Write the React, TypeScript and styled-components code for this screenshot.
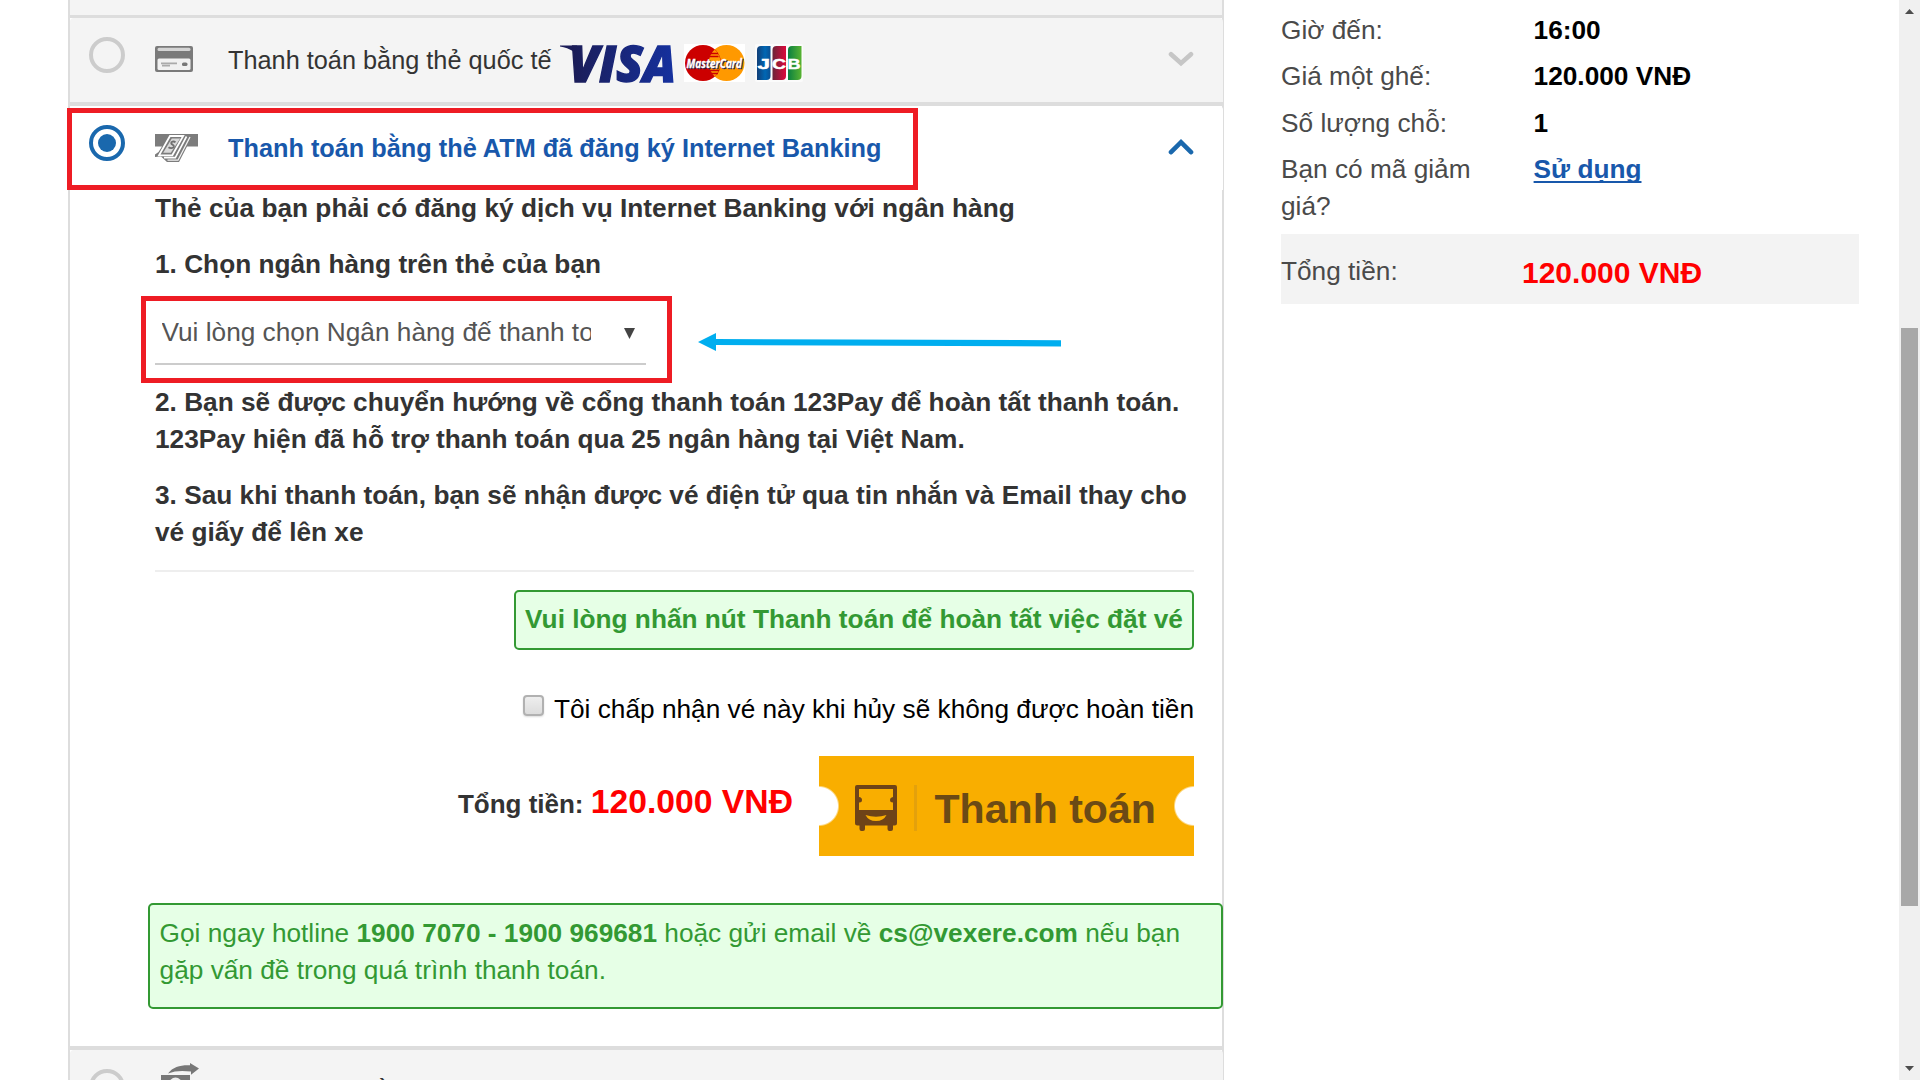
import React from 'react';
import styled, { createGlobalStyle, css } from 'styled-components';

const GlobalStyle = createGlobalStyle`
  *, *::before, *::after { box-sizing: border-box; }
  html, body { margin: 0; background: #fff; }
  body {
    font-family: "Liberation Sans", Arial, sans-serif;
    font-size: 26.24px;
    line-height: 37px;
    color: #333;
    overflow: hidden;
  }
  p { margin: 0; }
`;

const Page = styled.div`
  display: flex;
  width: 100%;
  height: 1080px;
  overflow: hidden;
  padding-left: 68px;
`;

const Panel = styled.main`
  flex: none;
  width: 1156px;
  border: solid #ddd;
  border-width: 0 2px;
`;

const PreviousMethod = styled.div`
  height: 18px;
  background: #f4f4f4;
  border-bottom: 3px solid #ddd;
`;

const MethodRow = styled.div<{ $active?: boolean }>`
  position: relative;
  display: flex;
  align-items: flex-start;
  width: 1153px;
  height: ${(p) => (p.$active ? '83.5px' : '88px')};
  padding: 19px 29px 0 19px;
  border-radius: 4px 4px 0 0;
  background: ${(p) => (p.$active ? '#fff' : '#f4f4f4')};
  border-bottom: ${(p) => (p.$active ? '0' : '4px solid #ddd')};
  color: ${(p) => (p.$active ? '#1858ab' : '#333')};
  font-size: 25.3px;
  font-weight: ${(p) => (p.$active ? 700 : 400)};
`;

const Radio = styled.span<{ $checked?: boolean }>`
  flex: none;
  display: grid;
  place-items: center;
  width: 36px;
  height: 36px;
  margin-right: 30px;
  border: 4px solid ${(p) => (p.$checked ? '#1a68ad' : '#ccc')};
  border-radius: 50%;
  ${(p) =>
    p.$checked &&
    css`
      &::after {
        content: '';
        width: 18px;
        height: 18px;
        border-radius: 50%;
        background: #1a68ad;
      }
    `}
`;

const MethodIcon = styled.span`
  flex: none;
  width: 73px;
  padding-top: 9px;
  svg { display: block; }
`;

const TransferSlot = styled(MethodIcon)`
  width: 68px;
  margin: -6px 0 0 5px;
  padding: 0;
`;

const MethodName = styled.span`
  padding-top: 5px;
  white-space: nowrap;
`;

const Brands = styled.span`
  display: flex;
  padding: 7px 0 0 8px;
  svg { display: block; }
`;

const LogoGap = styled.span<{ $w: number }>`
  width: ${(p) => p.$w}px;
`;

const Chevron = styled.span`
  margin-left: auto;
  padding-top: 13px;
  svg { display: block; }
`;

const HeaderFrame = styled.span`
  position: absolute;
  left: -3px;
  top: 2px;
  width: 851px;
  height: 82px;
  border: 5px solid #ee1c24;
`;

const Content = styled.section`
  padding: 0 28px 0 85px;
`;

const Step = styled.p`
  margin-bottom: 19px;
  font-weight: 700;
  white-space: nowrap;
`;

const BankSelect = styled.div`
  position: relative;
  display: flex;
  width: 491px;
  height: 63.5px;
  margin-bottom: 19px;
  padding: 12px 11px 0 6.5px;
  border-bottom: 2px solid #ccc;
  color: #555;
`;

const SelectText = styled.span`
  width: 429px;
  overflow: hidden;
  white-space: nowrap;
`;

const SelectArrow = styled.span`
  margin: 14.5px 0 0 auto;
  width: 11px;
  height: 11px;
  background: #444;
  clip-path: polygon(0 0, 100% 0, 50% 100%);
`;

const SelectFrame = styled.span`
  position: absolute;
  left: -14px;
  top: -6px;
  width: 531px;
  height: 87px;
  border: 5px solid #ee1c24;
`;

const Pointer = styled.svg`
  position: absolute;
  left: 543px;
  top: 30px;
`;

const Divider = styled.div`
  height: 2px;
  margin-bottom: 18px;
  background: #eee;
`;

const Checkout = styled.div`
  display: flex;
  flex-direction: column;
  align-items: flex-end;
`;

const Notice = styled.div`
  width: 680px;
  height: 60px;
  padding-top: 9px;
  border: 2px solid #393;
  border-radius: 5px;
  background: #e6ffe6;
  color: #393;
  font-weight: 700;
  text-align: center;
  white-space: nowrap;
`;

const Terms = styled.label`
  display: flex;
  align-items: flex-start;
  margin-top: 40.5px;
  color: #000;
  white-space: nowrap;
`;

const CheckBox = styled.span`
  width: 21px;
  height: 21px;
  margin: 4.5px 10px 0 0;
  border: 2px solid #b1b1b1;
  border-radius: 4px;
  background: linear-gradient(#eee, #dcdcdc);
  box-shadow: 0 1px 2px #ddd;
`;

const PayRow = styled.div`
  display: flex;
  align-items: flex-start;
  margin-top: 28.5px;
`;

const Total = styled.div`
  padding: 25px 26px 0 0;
  font-size: 26px;
  line-height: 41px;
  font-weight: 700;
  white-space: nowrap;
`;

const Amount = styled.span`
  color: #f00;
  font-size: 33.7px;
`;

const PayButton = styled.div`
  display: flex;
  align-items: center;
  width: 375px;
  height: 100px;
  padding: 0 0 0 36px;
  background:
    radial-gradient(circle at 0 50%, #fff 18.5px, transparent 20.5px),
    radial-gradient(circle at 100% 50%, #fff 18.5px, transparent 20.5px),
    #f9ae00;
  color: #6b4a15;
  font-size: 41.1px;
  font-weight: 700;
  white-space: nowrap;
  svg { display: block; margin-top: 4px; }
`;

const ButtonRule = styled.span`
  width: 3px;
  height: 46px;
  margin: 4px 18px 0 16.5px;
  background: #e4a10c;
`;

const ButtonText = styled.span`
  padding-top: 7px;
`;

const Hotline = styled.div`
  width: 1075px;
  height: 106px;
  margin: 47px 0 37px 78px;
  padding: 10px 0 0 9.6px;
  border: 2px solid #393;
  border-radius: 5px;
  background: #e6ffe6;
  color: #393;
  white-space: nowrap;
`;

const NextMethods = styled.div`
  border-top: 4px solid #ddd;
`;

const Summary = styled.aside`
  flex: none;
  width: 578px;
  margin-left: 57px;
  padding-top: 12px;
  color: #4a4a4a;
`;

const SummaryRow = styled.div`
  display: flex;
  margin-bottom: 9.3px;
`;

const SummaryLabel = styled.span`
  width: 220px;
  margin-right: 32.6px;
`;

const SummaryValue = styled.strong`
  color: #000;
`;

const PromoLink = styled.a`
  color: #1858ab;
  font-weight: 700;
  text-decoration: underline;
  text-decoration-thickness: 2px;
  text-underline-offset: 3px;
  text-decoration-skip-ink: none;
`;

const SummaryTotal = styled.div`
  display: flex;
  height: 70px;
  padding-top: 18.5px;
  background: #f3f3f3;
`;

const SummaryTotalLabel = styled.span`
  width: 241px;
`;

const SummaryTotalValue = styled.strong`
  padding-top: 1px;
  color: #f00;
  font-size: 30px;
`;

const ScrollBar = styled.div`
  flex: none;
  display: flex;
  flex-direction: column;
  align-items: center;
  justify-content: space-between;
  width: 21px;
  height: 1080px;
  margin-left: 40px;
  padding: 9px 0;
  background: #f0f0f0;
`;

const ScrollThumb = styled.div`
  width: 17px;
  height: 578px;
  margin: 314px 0 160px;
  background: #a8a8a8;
`;

const ScrollArrow = styled.span<{ $down?: boolean }>`
  width: 9px;
  height: 5px;
  background: #4d4d4d;
  clip-path: ${(p) => (p.$down ? 'polygon(0 0, 100% 0, 50% 100%)' : 'polygon(0 100%, 100% 100%, 50% 0)')};
`;

const CardIcon = () => (
  <svg width="38" height="26" viewBox="0 0 38 26">
    <rect width="38" height="26" rx="2" fill="#7a7a7a" />
    <rect x="2.5" y="1.8" width="33" height="3.2" rx="1.5" fill="#d4d4d4" />
    <rect x="2.5" y="12.6" width="33" height="11.4" rx="1.5" fill="#f1f1f1" />
    <path d="M6 17.3h16M7 19.7h8" stroke="#aaa" strokeWidth="1.7" />
    <rect x="27" y="16.5" width="5.5" height="3.6" rx="1.6" fill="#777" />
  </svg>
);

const AtmIcon = () => (
  <svg width="43" height="28" viewBox="0 0 43 28">
    <path d="M0 0H43V12.500H32L24 28H12L6 22.500L0 23V20.500L3.500 18L7 12.500H0Z" fill="#7c7c7c" />
    <path d="M15 2H28.200L17.300 21.300H4Z" fill="#7c7c7c" stroke="#fff" strokeWidth="1.800" />
    <path d="M16.800 4.400H25.200L15.800 18.800H8.200Z" fill="#d9d9d9" />
    <path d="M20.500 8.200c-2-1.300-4.600-.4-4.200 1.200.5 1.500 3.200 1.700 2.500 3.400-.8 1.600-3.700 1.700-5.300.4" fill="none" stroke="#6f6f6f" strokeWidth="1.900" />
    <path d="M31.500 2.500L20.300 23.600H9" fill="none" stroke="#fff" strokeWidth="1.600" />
    <path d="M35 3L23 26.200H12.500" fill="none" stroke="#fff" strokeWidth="1.300" opacity="0.900" />
  </svg>
);

const TransferIcon = () => (
  <svg width="40" height="34" viewBox="0 0 40 34">
    <path d="M8 10.5C13 3.5 21 1.8 30 2.2V0l9 5.5-8 6.3V8.6C22 7.4 15 7.8 8 10.5Z" fill="#777" />
    <rect x="1" y="12" width="29" height="19" fill="#777" />
    <circle cx="15.5" cy="21" r="6.5" fill="#eee" />
  </svg>
);

const VisaLogo = () => (
  <svg width="116" height="40" viewBox="0 0 116 40">
    <defs>
      <linearGradient id="visaBlue" x1="0" x2="1">
        <stop offset="0" stopColor="#1b1c55" />
        <stop offset="1" stopColor="#1531a0" />
      </linearGradient>
    </defs>
    <path d="M0 1.500H17L22 17C18 9 10 4 0 2.500Z" fill="#1b1d58" />
    <text
      x="9"
      y="37.5"
      fill="url(#visaBlue)"
      stroke="url(#visaBlue)"
      strokeWidth="1.400"
      fontFamily="Open Sans, Liberation Sans, sans-serif"
      fontSize="50"
      fontWeight="800"
      fontStyle="italic"
      textLength="107"
      lengthAdjust="spacingAndGlyphs"
    >
      VISA
    </text>
  </svg>
);

const MasterCardLogo = () => (
  <svg width="61" height="38" viewBox="0 0 61 38">
    <rect width="61" height="38" fill="#fff" />
    <circle cx="42.5" cy="19" r="18" fill="#f90" />
    <circle cx="19" cy="19" r="18" fill="#c00" />
    <path d="M30.7 5.600A18 18 0 0 1 30.7 32.400A18 18 0 0 1 30.7 5.600Z" fill="#f90" />
    <path d="M27 9.500h7M25.500 12.500h9M26 26.500h9M27 29.500h7" stroke="#c00" strokeWidth="1.500" />
    <g
      fontFamily="Open Sans, Liberation Sans, sans-serif"
      fontSize="12.5"
      fontWeight="700"
      fontStyle="italic"
    >
      <text x="3.500" y="24.500" fill="#26234f" stroke="#26234f" strokeWidth="0.500" textLength="55.5" lengthAdjust="spacingAndGlyphs">
        MasterCard
      </text>
      <text x="2.500" y="23.500" fill="#fff" stroke="#fff" strokeWidth="0.300" textLength="55.5" lengthAdjust="spacingAndGlyphs">
        MasterCard
      </text>
    </g>
  </svg>
);

const JcbLogo = () => (
  <svg width="48" height="38" viewBox="0 0 48 38">
    <defs>
      <linearGradient id="jcbBlue" x1="0" x2="1">
        <stop offset="0" stopColor="#123f78" />
        <stop offset="0.6" stopColor="#0067b4" />
        <stop offset="1" stopColor="#0a4f92" />
      </linearGradient>
      <linearGradient id="jcbRed" x1="0" x2="1">
        <stop offset="0" stopColor="#6b2438" />
        <stop offset="1" stopColor="#dc0a3c" />
      </linearGradient>
      <linearGradient id="jcbGreen" x1="0" x2="1">
        <stop offset="0" stopColor="#0b8040" />
        <stop offset="1" stopColor="#58b331" />
      </linearGradient>
    </defs>
    <rect width="48" height="38" rx="2" fill="#fbfbfb" />
    <path d="M6 2H15.500V32q0 4-4 4H2V6q0-4 4-4Z" fill="url(#jcbBlue)" />
    <path d="M21.500 2H31V32q0 4-4 4H17.500V6q0-4 4-4Z" fill="url(#jcbRed)" />
    <path d="M37 2H46.500V32q0 4-4 4H33V6q0-4 4-4Z" fill="url(#jcbGreen)" />
    <g fill="#fff" stroke="#fff" strokeWidth="0.500" fontFamily="Liberation Sans, Arial, sans-serif" fontSize="15" fontWeight="700">
      <text x="2.500" y="24.500" textLength="12.500" lengthAdjust="spacingAndGlyphs">J</text>
      <text x="17" y="24.500" textLength="14" lengthAdjust="spacingAndGlyphs">C</text>
      <text x="32.500" y="24.500" textLength="13" lengthAdjust="spacingAndGlyphs">B</text>
    </g>
  </svg>
);

const ChevronIcon = ({ up }: { up?: boolean }) => (
  <svg width="26" height="18" viewBox="0 0 26 18">
    <path
      d={up ? 'M3 14.200L13 4.200L23 14.200' : 'M3 4.200L13 13.200L23 4.200'}
      fill="none"
      stroke={up ? '#1a68ad' : '#c6c6c6'}
      strokeWidth="4.600"
      strokeLinecap="round"
      strokeLinejoin="miter"
    />
  </svg>
);

const BusIcon = () => (
  <svg width="42" height="46" viewBox="0 0 42 46">
    <path
      fillRule="evenodd"
      d="M2 0H40Q42 0 42 2V38Q42 40.500 39.500 40.500H38V44Q38 46 36 46H34.500Q32.500 46 32.500 44V40.500H10V44Q10 46 8 46H6.500Q4.500 46 4.500 44V40.500H2.500Q0 40.500 0 38V2Q0 0 2 0ZM4 4V12Q7 12.300 7 15T4 17.500V25H38V17.500Q35 17.500 35 15T38 12V4Z"
      fill="#6e4318"
    />
    <path d="M10.500 30Q21 33.500 31.500 30Q28.500 36 21 36T10.500 30Z" fill="#f9ae00" />
  </svg>
);

export default function App() {
  return (
    <>
      <GlobalStyle />
      <Page>
        <Panel>
          <PreviousMethod />
          <MethodRow>
            <Radio />
            <MethodIcon><CardIcon /></MethodIcon>
            <MethodName>Thanh toán bằng thẻ quốc tế</MethodName>
            <Brands>
              <VisaLogo />
              <LogoGap $w={8} />
              <MasterCardLogo />
              <LogoGap $w={10.5} />
              <JcbLogo />
            </Brands>
            <Chevron><ChevronIcon /></Chevron>
          </MethodRow>
          <MethodRow $active>
            <Radio $checked />
            <MethodIcon><AtmIcon /></MethodIcon>
            <MethodName>Thanh toán bằng thẻ ATM đã đăng ký Internet Banking</MethodName>
            <Chevron><ChevronIcon up /></Chevron>
            <HeaderFrame />
          </MethodRow>

          <Content>
            <Step>Thẻ của bạn phải có đăng ký dịch vụ Internet Banking với ngân hàng</Step>
            <Step>1. Chọn ngân hàng trên thẻ của bạn</Step>
            <BankSelect>
              <SelectText>Vui lòng chọn Ngân hàng đế thanh toán</SelectText>
              <SelectArrow />
              <SelectFrame />
              <Pointer width="364" height="20" viewBox="0 0 364 20">
                <path d="M0 10L18 1V7L363 8.200V14.500L18 13V19Z" fill="#00aeef" />
              </Pointer>
            </BankSelect>
            <Step>
              2. Bạn sẽ được chuyển hướng về cổng thanh toán 123Pay để hoàn tất thanh toán.
              <br />
              123Pay hiện đã hỗ trợ thanh toán qua 25 ngân hàng tại Việt Nam.
            </Step>
            <Step>
              3. Sau khi thanh toán, bạn sẽ nhận được vé điện tử qua tin nhắn và Email thay cho
              <br />
              vé giấy để lên xe
            </Step>
            <Divider />
            <Checkout>
              <Notice>Vui lòng nhấn nút Thanh toán để hoàn tất việc đặt vé</Notice>
              <Terms>
                <CheckBox />
                Tôi chấp nhận vé này khi hủy sẽ không được hoàn tiền
              </Terms>
              <PayRow>
                <Total>
                  Tổng tiền: <Amount>120.000 VNĐ</Amount>
                </Total>
                <PayButton>
                  <BusIcon />
                  <ButtonRule />
                  <ButtonText>Thanh toán</ButtonText>
                </PayButton>
              </PayRow>
            </Checkout>
          </Content>

          <Hotline>
            Gọi ngay hotline <strong>1900 7070 - 1900 969681</strong> hoặc gửi email về{' '}
            <strong>cs@vexere.com</strong> nếu bạn
            <br />
            gặp vấn đề trong quá trình thanh toán.
          </Hotline>

          <NextMethods>
            <MethodRow>
              <Radio />
              <TransferSlot><TransferIcon /></TransferSlot>
              <MethodName>Thanh toán bằng hình thức chuyển khoản</MethodName>
            </MethodRow>
          </NextMethods>
        </Panel>

        <Summary>
          <SummaryRow>
            <SummaryLabel>Giờ đến:</SummaryLabel>
            <SummaryValue>16:00</SummaryValue>
          </SummaryRow>
          <SummaryRow>
            <SummaryLabel>Giá một ghế:</SummaryLabel>
            <SummaryValue>120.000 VNĐ</SummaryValue>
          </SummaryRow>
          <SummaryRow>
            <SummaryLabel>Số lượng chỗ:</SummaryLabel>
            <SummaryValue>1</SummaryValue>
          </SummaryRow>
          <SummaryRow>
            <SummaryLabel>Bạn có mã giảm giá?</SummaryLabel>
            <PromoLink>Sử dụng</PromoLink>
          </SummaryRow>
          <SummaryTotal>
            <SummaryTotalLabel>Tổng tiền:</SummaryTotalLabel>
            <SummaryTotalValue>120.000 VNĐ</SummaryTotalValue>
          </SummaryTotal>
        </Summary>

        <ScrollBar>
          <ScrollArrow />
          <ScrollThumb />
          <ScrollArrow $down />
        </ScrollBar>
      </Page>
    </>
  );
}
